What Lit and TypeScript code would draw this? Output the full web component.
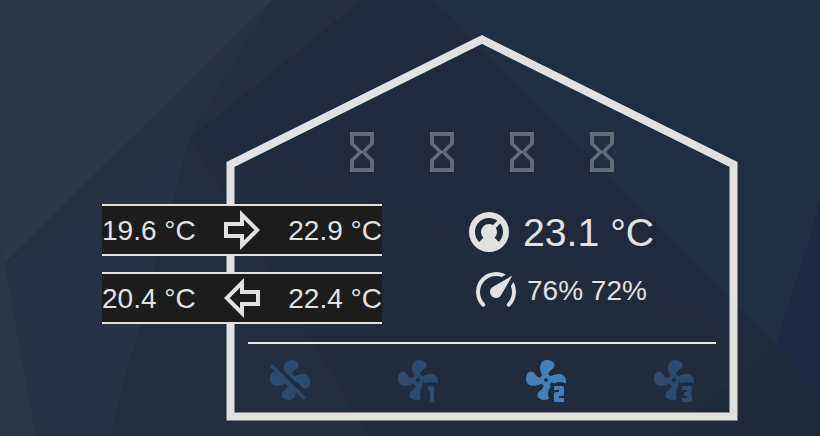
import { LitElement, html, svg, css } from "lit";
import { customElement } from "lit/decorators.js";
import { classMap } from "lit/directives/class-map.js";

const FAN_BLADES =
  "M13 19C13 17.59 13.5 16.3 14.3 15.28C14.17 14.97 14.03 14.65 13.86 14.34C14.26 14 14.57 13.59 14.77 13.11C15.26 13.21 15.78 13.39 16.25 13.67C17.07 13.25 18 13 19 13C20.05 13 21.03 13.27 21.89 13.74C21.95 13.37 22 12.96 22 12.5C22 8.92 18.03 8.13 14.33 10.13C14 9.73 13.59 9.42 13.11 9.22C13.3 8.29 13.74 7.24 14.73 6.75C17.09 5.57 17 2 12.5 2C8.93 2 8.14 5.96 10.13 9.65C9.72 9.97 9.4 10.39 9.21 10.87C8.28 10.68 7.23 10.25 6.73 9.26C5.56 6.89 2 7 2 11.5C2 15.07 5.95 15.85 9.64 13.87C9.96 14.27 10.39 14.59 10.88 14.79C10.68 15.71 10.24 16.75 9.26 17.24C6.9 18.42 7 22 11.5 22C12.31 22 13 21.78 13.5 21.41C13.19 20.67 13 19.86 13 19M12 13C11.43 13 11 12.55 11 12S11.43 11 12 11C12.54 11 13 11.45 13 12S12.54 13 12 13Z";

const ICONS = {
  sand: "M6,2V8L10,12L6,16V22H18V16L14,12L18,8V2H6M16,16.5V20H8V16.5L12,12.5L16,16.5M12,11.5L8,7.5V4H16V7.5L12,11.5Z",
  right: "M22,12L12,2V8H4V16H12V22L22,12M14,17.17V14H6V10H14V6.83L19.17,12L14,17.17Z",
  left: "M2,12L12,22V16H20V8H12V2L2,12M10,6.83V10H18V14H10V17.17L4.83,12L10,6.83Z",
  thermostat:
    "M16.95,16.95L14.83,14.83C15.55,14.1 16,13.1 16,12C16,11.26 15.79,10.57 15.43,10L17.6,7.81C18.5,9 19,10.43 19,12C19,13.93 18.22,15.68 16.95,16.95M12,5C13.57,5 15,5.5 16.19,6.4L14,8.56C13.43,8.21 12.74,8 12,8A4,4 0 0,0 8,12C8,13.1 8.45,14.1 9.17,14.83L7.05,16.95C5.78,15.68 5,13.93 5,12A7,7 0 0,1 12,5M12,2A10,10 0 0,0 2,12A10,10 0 0,0 12,22A10,10 0 0,0 22,12A10,10 0 0,0 12,2Z",
  gauge:
    "M12,16A3,3 0 0,1 9,13C9,11.88 9.61,10.9 10.5,10.39L20.21,4.77L14.68,14.35C14.18,15.33 13.17,16 12,16M12,3C13.81,3 15.5,3.5 16.97,4.32L14.87,5.53C14,5.19 13,5 12,5A8,8 0 0,0 4,13C4,15.21 4.89,17.21 6.34,18.65H6.35C6.74,19.04 6.74,19.67 6.35,20.06C5.96,20.45 5.32,20.45 4.93,20.07V20.07C3.12,18.26 2,15.76 2,13A10,10 0 0,1 12,3M22,13C22,15.76 20.88,18.26 19.07,20.07V20.07C18.68,20.45 18.05,20.45 17.66,20.06C17.27,19.67 17.27,19.04 17.66,18.65V18.65C19.11,17.2 20,15.21 20,13C20,12 19.81,11 19.46,10.1L20.67,8C21.5,9.5 22,11.18 22,13Z",
  fanOff:
    "M12.5,2C9.64,2 8.57,4.55 9.29,7.47L15,13.16C15.87,13.37 16.81,13.81 17.28,14.73C18.46,17.1 22.03,17 22.03,12.5C22.03,8.92 18.05,8.13 14.35,10.13C14.03,9.73 13.61,9.42 13.13,9.22C13.32,8.29 13.76,7.24 14.75,6.75C17.11,5.57 17,2 12.5,2M3.28,4L2,5.27L4.47,7.73C3.22,7.74 2,8.87 2,11.5C2,15.07 5.96,15.85 9.65,13.87C9.97,14.27 10.4,14.59 10.89,14.79C10.69,15.71 10.25,16.75 9.27,17.24C6.91,18.42 7,22 11.5,22C13.8,22 14.94,20.36 14.94,18.21L18.73,22L20,20.72L3.28,4Z",
  fan1: FAN_BLADES + "M18 23V17H17V15H20V23Z",
  fan2:
    FAN_BLADES +
    "M16 15V17H18.5V18H17A1 1 0 0 0 16 19V23H21V21H18.5V20H20A1 1 0 0 0 21 19V16A1 1 0 0 0 20 15Z",
  fan3:
    FAN_BLADES +
    "M16 15V17H18.5V18H17V20H18.5V21H16V23H20A1 1 0 0 0 21 22V20.2A1.2 1.2 0 0 0 19.8 19A1.2 1.2 0 0 0 21 17.8V16A1 1 0 0 0 20 15Z",
};

type IconName = keyof typeof ICONS;

// Backdrop facets: [fill, points]
const FACETS: [string, string][] = [
  ["#2b3746", "0,0 272,0 5,263 0,250"],
  ["#25313f", "272,0 190,138 5,263"],
  ["#232f3f", "272,0 362,0 190,138"],
  ["#253243", "190,138 110,436 36,436 5,263"],
  ["#293545", "0,250 5,263 36,436 0,436"],
  ["#222d3e", "190,138 370,436 110,436"],
  ["#1f2a3c", "362,0 434,0 776,345 190,138"],
  ["#202b3c", "190,138 776,345 668,436 370,436"],
  ["#202e41", "434,0 820,0 820,205 776,345"],
  ["#1e2840", "776,345 820,205 820,400"],
  ["#1e293a", "776,345 820,400 820,436 668,436"],
];

const FLOWS: { from: string; icon: IconName; to: string }[] = [
  { from: "19.6 °C", icon: "right", to: "22.9 °C" },
  { from: "20.4 °C", icon: "left", to: "22.4 °C" },
];

const SPEEDS: { icon: IconName; active: boolean }[] = [
  { icon: "fanOff", active: false },
  { icon: "fan1", active: false },
  { icon: "fan2", active: true },
  { icon: "fan3", active: false },
];

const icon = (name: IconName) => html`
  <svg class="icon" viewBox="0 0 24 24"><path d=${ICONS[name]} /></svg>
`;

@customElement("app-root")
export class AppRoot extends LitElement {
  static styles = css`
    :host {
      display: block;
      position: relative;
      width: 820px;
      height: 436px;
      overflow: hidden;
      background: #202b3c;
      color: #e1e1e1;
      font-family: "Liberation Sans", Arial, Helvetica, sans-serif;
      font-size: 28px;
      line-height: 50px;
      white-space: nowrap;
    }
    .backdrop {
      position: absolute;
      inset: 0;
      width: 820px;
      height: 436px;
    }
    .outline {
      fill: none;
      stroke: #e1e1e1;
      stroke-width: 8;
    }
    .icon {
      display: block;
      flex: none;
      width: 48px;
      height: 48px;
      fill: currentColor;
    }
    .house {
      position: relative;
      display: flex;
      flex-direction: column;
      box-sizing: border-box;
      width: 468px;
      height: 436px;
      margin-left: 248px;
      padding-top: 128px;
    }
    .timers {
      display: flex;
      justify-content: center;
      gap: 32px;
      color: #636b76;
    }
    .climate {
      flex: 1;
      display: flex;
      flex-direction: column;
      gap: 10px;
      padding: 32px 0 0 217px;
    }
    .reading {
      display: flex;
      gap: 9px;
      height: 48px;
    }
    .reading.main {
      gap: 10px;
      font-size: 39.2px;
    }
    .reading.humidity {
      gap: 7px;
      padding-left: 7px;
    }
    .speeds {
      display: flex;
      justify-content: center;
      gap: 80px;
      height: 80px;
      padding-top: 12px;
      border-top: 2px solid #e6e6e2;
      color: #2c4a6b;
    }
    .active {
      color: #4480b7;
    }
    .flows {
      position: absolute;
      left: 102px;
      top: 204px;
      display: flex;
      flex-direction: column;
      gap: 16px;
      width: 280px;
    }
    .flow {
      display: flex;
      justify-content: space-between;
      height: 48px;
      border: solid #e1e1e1;
      border-width: 2px 0;
      background: #1c1c1c;
    }
    .arrow.right {
      margin-left: -4px;
    }
    .arrow.left {
      margin-right: -4px;
    }
  `;

  render() {
    return html`
      <svg class="backdrop" viewBox="0 0 820 436">
        ${FACETS.map(([fill, points]) => svg`<polygon fill=${fill} points=${points} />`)}
        <path class="outline" d="M482 39.5L733.5 164.5V416.5H230.5V164.5Z" />
      </svg>
      <div class="house">
        <div class="timers">${[0, 1, 2, 3].map(() => icon("sand"))}</div>
        <div class="climate">
          <div class="reading main">${icon("thermostat")}<span>23.1 °C</span></div>
          <div class="reading humidity">${icon("gauge")}<span>76% 72%</span></div>
        </div>
        <div class="speeds">
          ${SPEEDS.map(
            (s) => html`<span class=${classMap({ speed: true, active: s.active })}>${icon(s.icon)}</span>`
          )}
        </div>
      </div>
      <div class="flows">
        ${FLOWS.map(
          (f) => html`<div class="flow">
            <span>${f.from}</span><span class="arrow ${f.icon}">${icon(f.icon)}</span><span>${f.to}</span>
          </div>`
        )}
      </div>
    `;
  }
}
